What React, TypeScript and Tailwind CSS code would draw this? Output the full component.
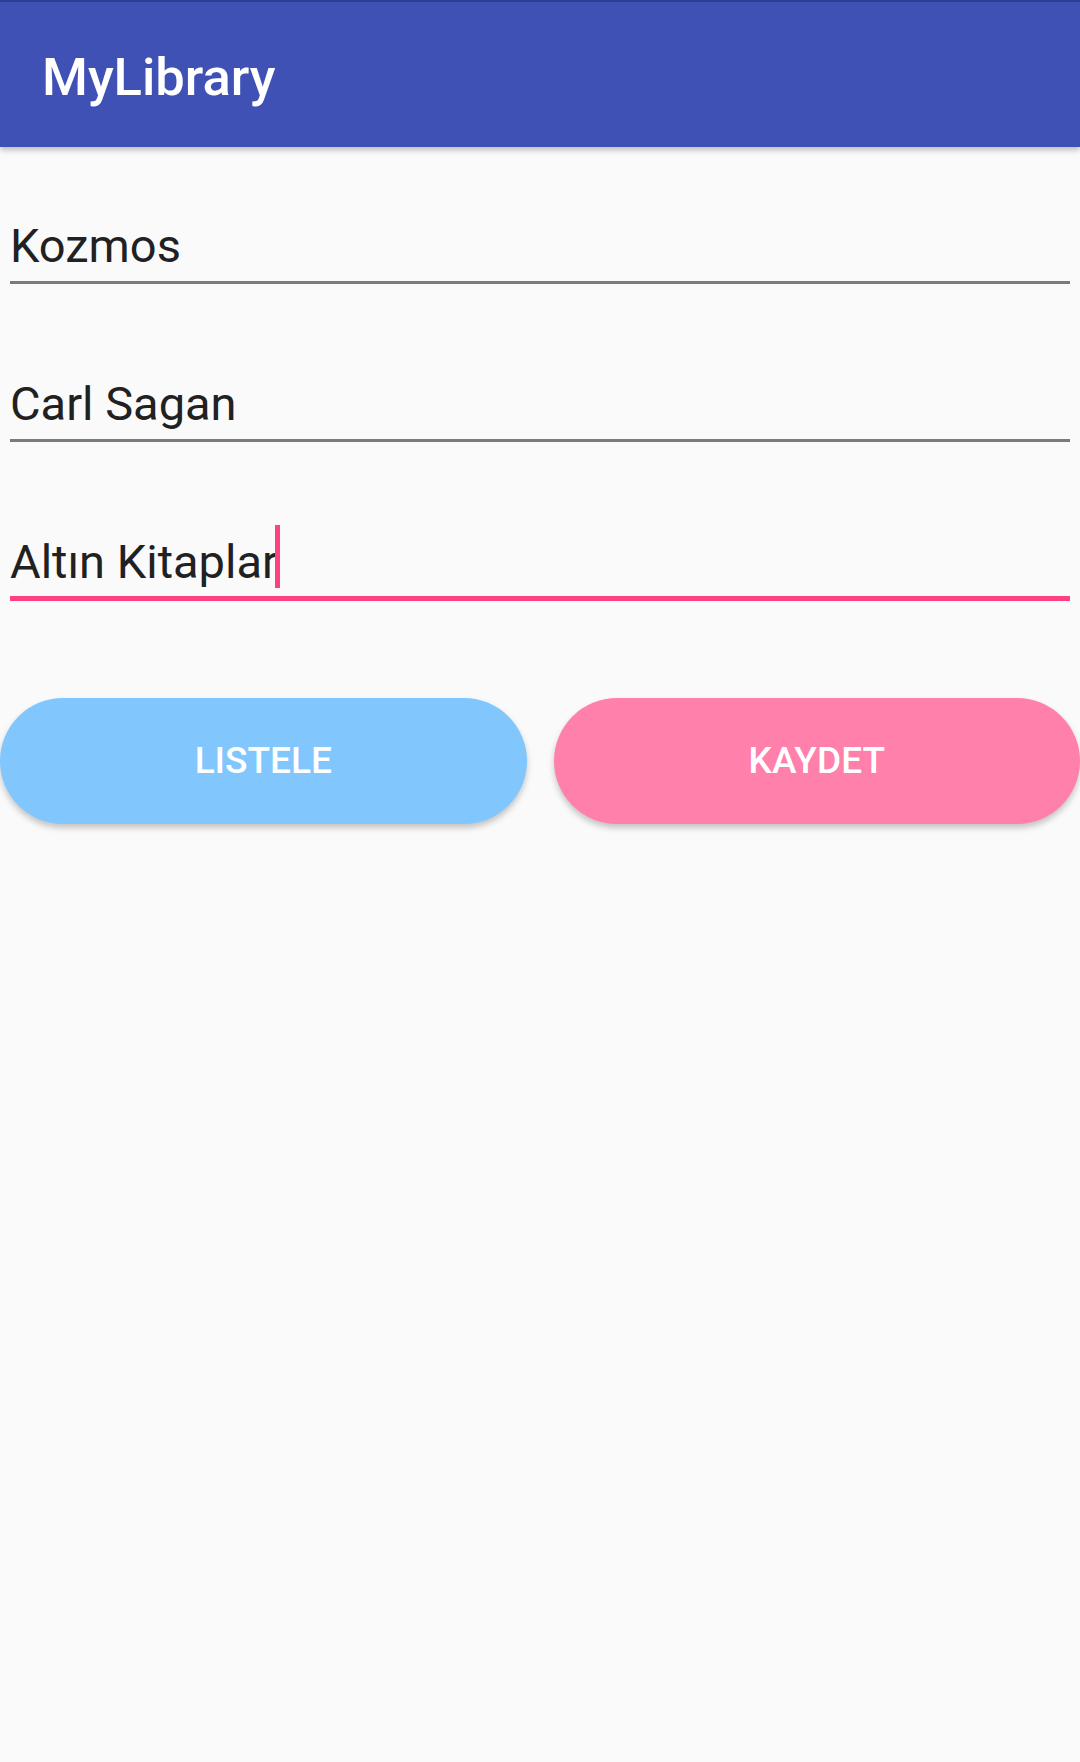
import React from "react"

type FieldProps = {
  value: string
  focused?: boolean
}

function Field({ value, focused }: FieldProps) {
  return (
    <div
      className={
        focused
          ? "border-b-[5px] border-[#ff4081] pb-[7px]"
          : "border-b-[3px] border-[#7b7b7b] pb-[8px]"
      }
    >
      <div className="text-[47px] leading-[55px] text-[#212121]">
        <span className="relative">
          {value}
          {focused && <span className="absolute right-[-2px] top-[-9px] h-[63px] w-[5px] bg-[#ff4081]" />}
        </span>
      </div>
    </div>
  )
}

export default function App() {
  return (
    <div className="min-h-[1762px] w-[1080px] bg-[#fafafa]" style={{ fontFamily: "Roboto, 'Noto Sans', sans-serif" }}>
      {/* Toolbar */}
      <div className="relative z-10 flex h-[147px] items-center border-t-2 border-[#2f3d96] bg-[#3f51b5] px-[42px] pt-[5px] shadow-[0_3px_6px_rgba(0,0,0,0.25)]">
        <h1 className="text-[52.5px] font-medium leading-none text-white">MyLibrary</h1>
      </div>

      {/* Form */}
      <div className="flex flex-col gap-[92px] px-[10px] pt-[71px]">
        <Field value="Kozmos" />
        <Field value="Carl Sagan" />
        <Field value="Altın Kitaplar" focused />
      </div>

      {/* Buttons */}
      <div className="mt-[97px] flex gap-[27px]">
        <button className="h-[126px] flex-1 rounded-full bg-[#81c7fe] text-[37px] font-medium text-white shadow-[0_4px_6px_rgba(0,0,0,0.22)]">
          LISTELE
        </button>
        <button className="h-[126px] flex-1 rounded-full bg-[#ff80ab] text-[37px] font-medium text-white shadow-[0_4px_6px_rgba(0,0,0,0.22)]">
          KAYDET
        </button>
      </div>
    </div>
  )
}
